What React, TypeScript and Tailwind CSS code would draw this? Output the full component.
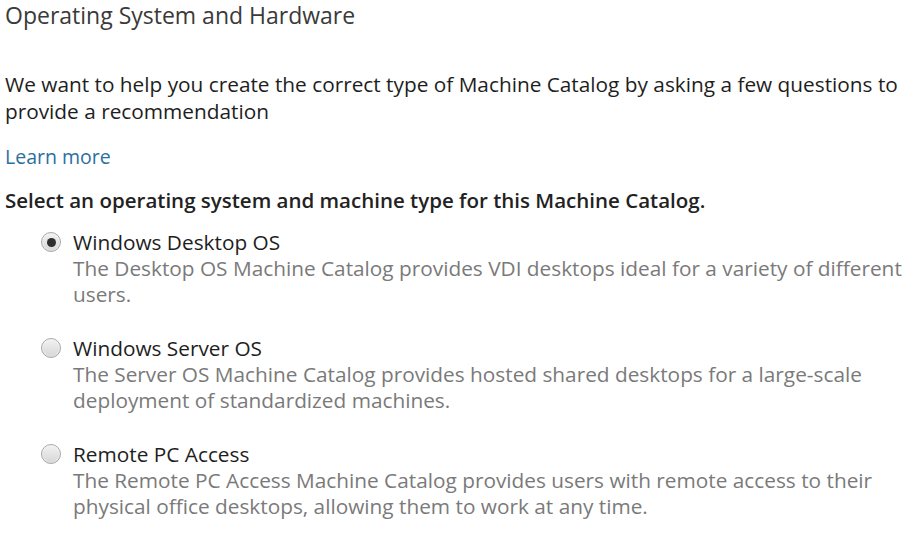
import React from "react";

function Radio({ checked }: { checked?: boolean }) {
  return (
    <span className="relative inline-flex h-[20px] w-[20px] shrink-0 items-center justify-center rounded-full border border-[#a8a8a8] bg-gradient-to-b from-[#f2f2f2] to-[#d6d6d6] shadow-[inset_0_0_2px_rgba(255,255,255,0.9)]">
      {checked && <span className="h-[9px] w-[9px] rounded-full bg-[#2e2e2e]" />}
    </span>
  );
}

function Option({ checked, label, desc }: { checked?: boolean; label: string; desc: string[] }) {
  return (
    <div className="flex flex-col">
      <div className="flex items-center gap-[12px] h-[26px]">
        <Radio checked={checked} />
        <span className="text-[#1e1e1e] leading-[26px]">{label}</span>
      </div>
      <div className="pl-[32px] text-[#7a7a7a] leading-[26px]">
        {desc.map((d, i) => (
          <div key={i} className="whitespace-nowrap">{d}</div>
        ))}
      </div>
    </div>
  );
}

export default function App() {
  return (
    <div
      className="w-[916px] h-[535px] bg-white overflow-hidden text-[20.8px] text-[#222] pl-[5px] pt-[2px]"
      style={{ fontFamily: '"Open Sans", "Noto Sans", sans-serif' }}
    >
      <div className="h-[26px] text-[23px] text-[#3a3a3a] leading-[26px] whitespace-nowrap">Operating System and Hardware</div>
      <div className="mt-[43px] leading-[27px] text-[#1e1e1e] whitespace-nowrap">
        <div>We want to help you create the correct type of Machine Catalog by asking a few questions to</div>
        <div>provide a recommendation</div>
      </div>
      <div className="mt-[19px] text-[#2c6f9e] leading-[26px] text-[19.5px]">Learn more</div>
      <div className="mt-[17px] font-semibold text-[20.5px] text-[#222] leading-[26px] whitespace-nowrap">Select an operating system and machine type for this Machine Catalog.</div>
      <div className="mt-[16px] pl-[36px] flex flex-col gap-[28px]">
        <Option
          checked
          label="Windows Desktop OS"
          desc={["The Desktop OS Machine Catalog provides VDI desktops ideal for a variety of different", "users."]}
        />
        <Option
          label="Windows Server OS"
          desc={["The Server OS Machine Catalog provides hosted shared desktops for a large-scale", "deployment of standardized machines."]}
        />
        <Option
          label="Remote PC Access"
          desc={["The Remote PC Access Machine Catalog provides users with remote access to their", "physical office desktops, allowing them to work at any time."]}
        />
      </div>
    </div>
  );
}
